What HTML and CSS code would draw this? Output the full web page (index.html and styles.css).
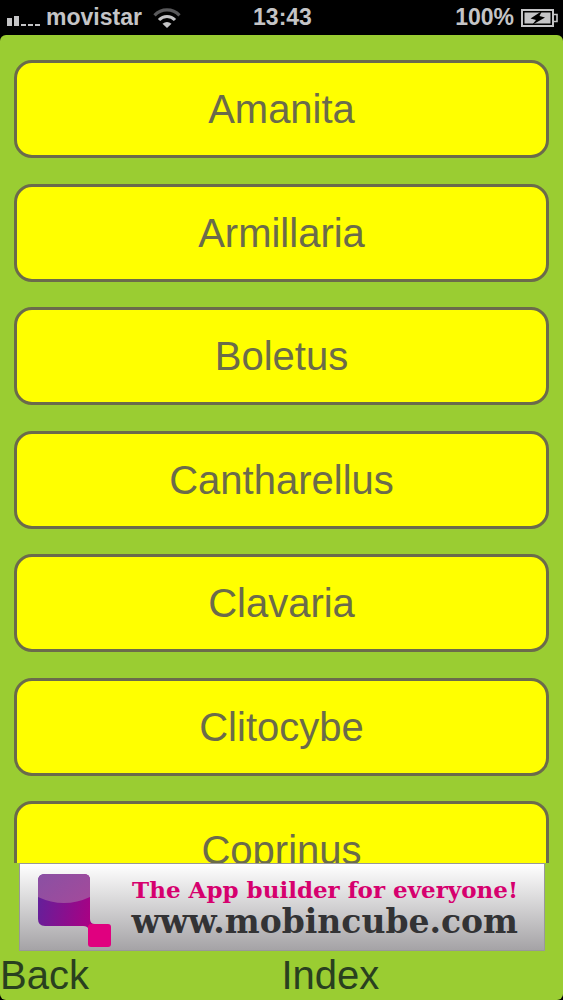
FILE: index.html
```html
<!DOCTYPE html>
<html lang="en">
<head>
<meta charset="utf-8">
<meta name="viewport" content="width=device-width, initial-scale=1">
<title>Index</title>
<link rel="stylesheet" href="styles.css">
</head>
<body>
<header class="status">
  <div class="carrier">
    <svg class="signal" width="34" height="10" viewBox="0 0 34 10" aria-hidden="true"><path d="M0 2h5v8H0zM7 0h5v10H7zM14 8h5v2h-5zM21 8h5v2h-5zM28 8h5v2h-5z" fill="#c4c4c6"/></svg>
    <span>movistar</span>
    <svg class="wifi" width="28" height="20" viewBox="0 0 28 20" fill="none" stroke-width="3.2" aria-hidden="true"><path d="M1.5 7.3C8.500 0 19.500 0 26.500 7.300" stroke="#59595b"/><path d="M6 12C10.500 7.300 17.500 7.300 22 12" stroke="#c4c4c6"/><path d="M9.500 15.800Q14 12 18.500 15.800L14 20z" fill="#c4c4c6"/></svg>
  </div>
  <time class="clock">13:43</time>
  <div class="power">
    <span>100%</span>
    <svg width="37" height="18" viewBox="0 0 37 18" aria-hidden="true"><rect x="1" y="1" width="31" height="16" fill="none" stroke="#c4c4c6" stroke-width="2"/><rect x="3.500" y="3.500" width="26" height="11" fill="#c4c4c6"/><path d="M33 5.500h3v7h-3" fill="none" stroke="#c4c4c6" stroke-width="1.600"/><path d="M21 2L9.500 9.500l5.500 1.500-4 5L24 8.500l-5.500-1.500z" fill="#000"/></svg>
  </div>
</header>
<div class="app">
  <main class="list">
    <button class="item" type="button">Amanita</button>
    <button class="item" type="button">Armillaria</button>
    <button class="item" type="button">Boletus</button>
    <button class="item" type="button">Cantharellus</button>
    <button class="item" type="button">Clavaria</button>
    <button class="item" type="button">Clitocybe</button>
    <button class="item" type="button">Coprinus</button>
  </main>
  <a class="banner" href="#">
    <svg class="logo" width="75" height="75" viewBox="0 0 75 75" aria-hidden="true">
      <defs>
        <linearGradient id="cube" x1="0" y1=".4" x2="1" y2=".6"><stop offset="0" stop-color="#63209a"/><stop offset="1" stop-color="#ac0083"/></linearGradient>
        <linearGradient id="shine" x1="0" y1="0" x2="1" y2=".6"><stop offset="0" stop-color="#8a50a3"/><stop offset="1" stop-color="#a04b9c"/></linearGradient>
      </defs>
      <path d="M7 1H46Q52 1 52 7V46Q52 51 57 51L51 57Q50 53 45 53H7Q0 53 0 46V8Q0 1 7 1z" fill="url(#cube)"/>
      <path d="M7 1H46Q52 1 52 7V24Q26 36 0 24V8Q0 1 7 1z" fill="url(#shine)"/>
      <rect x="50" y="51" width="23" height="23" rx="3" fill="#e0007f"/>
    </svg>
    <span class="slogan"><span class="tagline">The App builder for everyone!</span><span class="site">www.mobincube.com</span></span>
  </a>
  <footer class="toolbar">
    <button class="action" type="button">Back</button>
    <button class="action" type="button">Index</button>
  </footer>
</div>
</body>
</html>
```
FILE: styles.css
```css
* { box-sizing: border-box; }
html { height: 100%; }
body {
  display: flex;
  flex-direction: column;
  height: 100%;
  margin: 0;
  background: #000;
  font-family: "Liberation Sans", Arial, sans-serif;
}
button { font-family: inherit; cursor: pointer; }
.status {
  display: grid;
  grid-template-columns: 1fr auto 1fr;
  align-items: center;
  height: 35px;
  padding: 0 5px 0 7px;
  color: #c4c4c6;
  font-size: 23px;
  font-weight: bold;
}
.carrier, .power { display: flex; align-items: center; }
.carrier { gap: 5px; }
.signal { margin-top: 6px; }
.wifi { margin-left: 6px; }
.power { justify-content: flex-end; gap: 7px; }
.app {
  display: flex;
  flex: 1;
  flex-direction: column;
  min-height: 0;
  overflow: hidden;
  border-radius: 6px;
  background: #9acd32;
}
.list {
  display: flex;
  flex: 1;
  flex-direction: column;
  min-height: 0;
  padding: 25px 14px 0;
  overflow: hidden;
}
.item {
  flex: none;
  height: 98px;
  margin: 0 0 26px;
  padding: 0;
  border: 3px solid #6b6b4b;
  border-radius: 18px;
  background: #ff0;
  color: #6b6b4b;
  font-size: 40px;
}
.item:nth-child(even) { margin-bottom: 25px; }
.banner {
  display: flex;
  flex: none;
  align-items: center;
  justify-content: space-between;
  height: 88px;
  margin: 0 18px 0 19px;
  padding: 0 26px 0 18px;
  border: 1px solid #999;
  background: linear-gradient(#fff, #a5a3a6);
  font-family: "DejaVu Serif", serif;
  font-weight: bold;
  text-decoration: none;
  white-space: nowrap;
}
.logo { margin-top: 6px; }
.slogan { display: flex; flex-direction: column; align-items: flex-end; }
.tagline { color: #d6006e; font-size: 23px; line-height: 30px; }
.site { color: #333335; font-size: 33px; line-height: 34px; }
.toolbar {
  display: grid;
  flex: none;
  grid-template-columns: 1fr 1fr;
  height: 49px;
}
.action {
  padding: 0;
  border: 0;
  background: none;
  color: #29401f;
  font-size: 40px;
  line-height: 49px;
  text-align: left;
}
```
